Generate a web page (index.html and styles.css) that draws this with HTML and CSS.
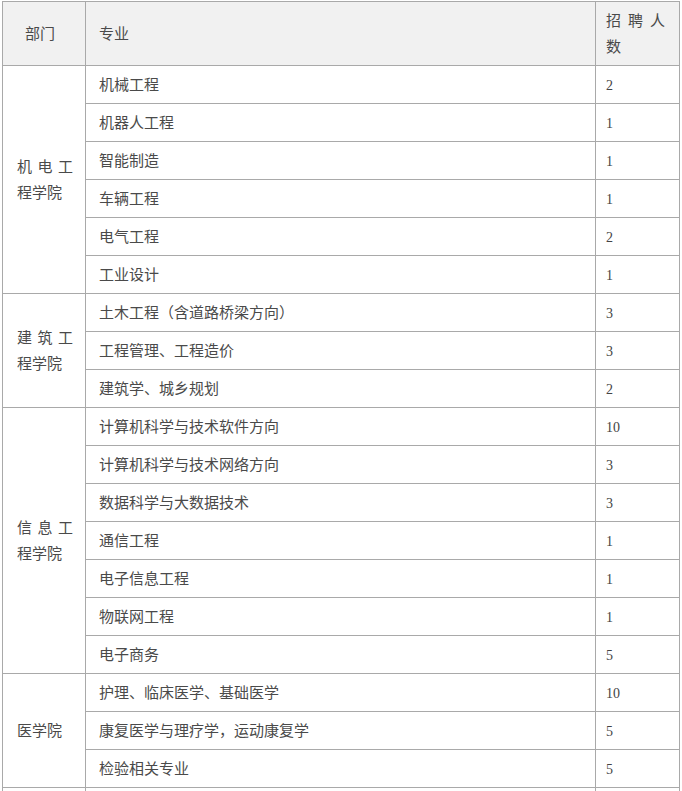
FILE: index.html
```html
<!DOCTYPE html>
<html lang="zh-CN">
<head>
<meta charset="utf-8">
<title>招聘专业</title>
<link rel="stylesheet" href="styles.css">
</head>
<body>
<table class="recruit">
  <colgroup>
    <col class="c-dept">
    <col class="c-major">
    <col class="c-num">
  </colgroup>
  <thead>
    <tr>
      <th class="dept head-dept">部门</th>
      <th class="major">专业</th>
      <th class="num head-num">招聘人数</th>
    </tr>
  </thead>
  <tbody>
    <tr><td class="dept" rowspan="6">机电工程学院</td><td class="major">机械工程</td><td class="num">2</td></tr>
    <tr><td class="major">机器人工程</td><td class="num">1</td></tr>
    <tr><td class="major">智能制造</td><td class="num">1</td></tr>
    <tr><td class="major">车辆工程</td><td class="num">1</td></tr>
    <tr><td class="major">电气工程</td><td class="num">2</td></tr>
    <tr><td class="major">工业设计</td><td class="num">1</td></tr>

    <tr><td class="dept" rowspan="3">建筑工程学院</td><td class="major">土木工程（含道路桥梁方向）</td><td class="num">3</td></tr>
    <tr><td class="major">工程管理、工程造价</td><td class="num">3</td></tr>
    <tr><td class="major">建筑学、城乡规划</td><td class="num">2</td></tr>

    <tr><td class="dept" rowspan="7">信息工程学院</td><td class="major">计算机科学与技术软件方向</td><td class="num">10</td></tr>
    <tr><td class="major">计算机科学与技术网络方向</td><td class="num">3</td></tr>
    <tr><td class="major">数据科学与大数据技术</td><td class="num">3</td></tr>
    <tr><td class="major">通信工程</td><td class="num">1</td></tr>
    <tr><td class="major">电子信息工程</td><td class="num">1</td></tr>
    <tr><td class="major">物联网工程</td><td class="num">1</td></tr>
    <tr><td class="major">电子商务</td><td class="num">5</td></tr>

    <tr><td class="dept" rowspan="3">医学院</td><td class="major">护理、临床医学、基础医学</td><td class="num">10</td></tr>
    <tr><td class="major">康复医学与理疗学，运动康复学</td><td class="num">5</td></tr>
    <tr><td class="major">检验相关专业</td><td class="num">5</td></tr>

    <tr><td class="dept">&nbsp;</td><td class="major">&nbsp;</td><td class="num">&nbsp;</td></tr>
  </tbody>
</table>
</body>
</html>
```
FILE: styles.css
```css
html, body {
  margin: 0;
  padding: 0;
  background: #ffffff;
}

body {
  padding: 1px 0 0 2px;
  font-family: "Noto Sans CJK SC", "Noto Sans", sans-serif;
  font-size: 15px;
  color: #4a4a4a;
}

.recruit {
  border-collapse: collapse;
  table-layout: fixed;
  width: 677px;
}

.c-dept { width: 83px; }
.c-major { width: 510px; }
.c-num { width: 84px; }

.recruit th,
.recruit td {
  border: 1px solid #a9a9a9;
  line-height: 26px;
  padding: 5px 14px 6px 13px;
  text-align: left;
  vertical-align: middle;
  font-weight: normal;
}

.recruit thead th {
  background: #f1f1f1;
  height: 52px;
}

.recruit .dept {
  padding-left: 14px;
  padding-right: 12px;
  text-align: justify;
  text-justify: inter-character;
}

.recruit .head-dept {
  padding-left: 22px;
  text-align: left;
}

.recruit .major {
  padding-left: 13px;
}

.recruit .num {
  padding: 7px 14px 4px 10px;
  font-family: "Liberation Serif", "Noto Sans CJK SC", serif;
  font-size: 14px;
  color: #444;
}

.recruit .head-num {
  padding: 5px 14px 6px 10px;
  font-family: "Noto Sans CJK SC", "Noto Sans", sans-serif;
  font-size: 15px;
  text-align: justify;
  text-justify: inter-character;
  color: #4a4a4a;
}
```
